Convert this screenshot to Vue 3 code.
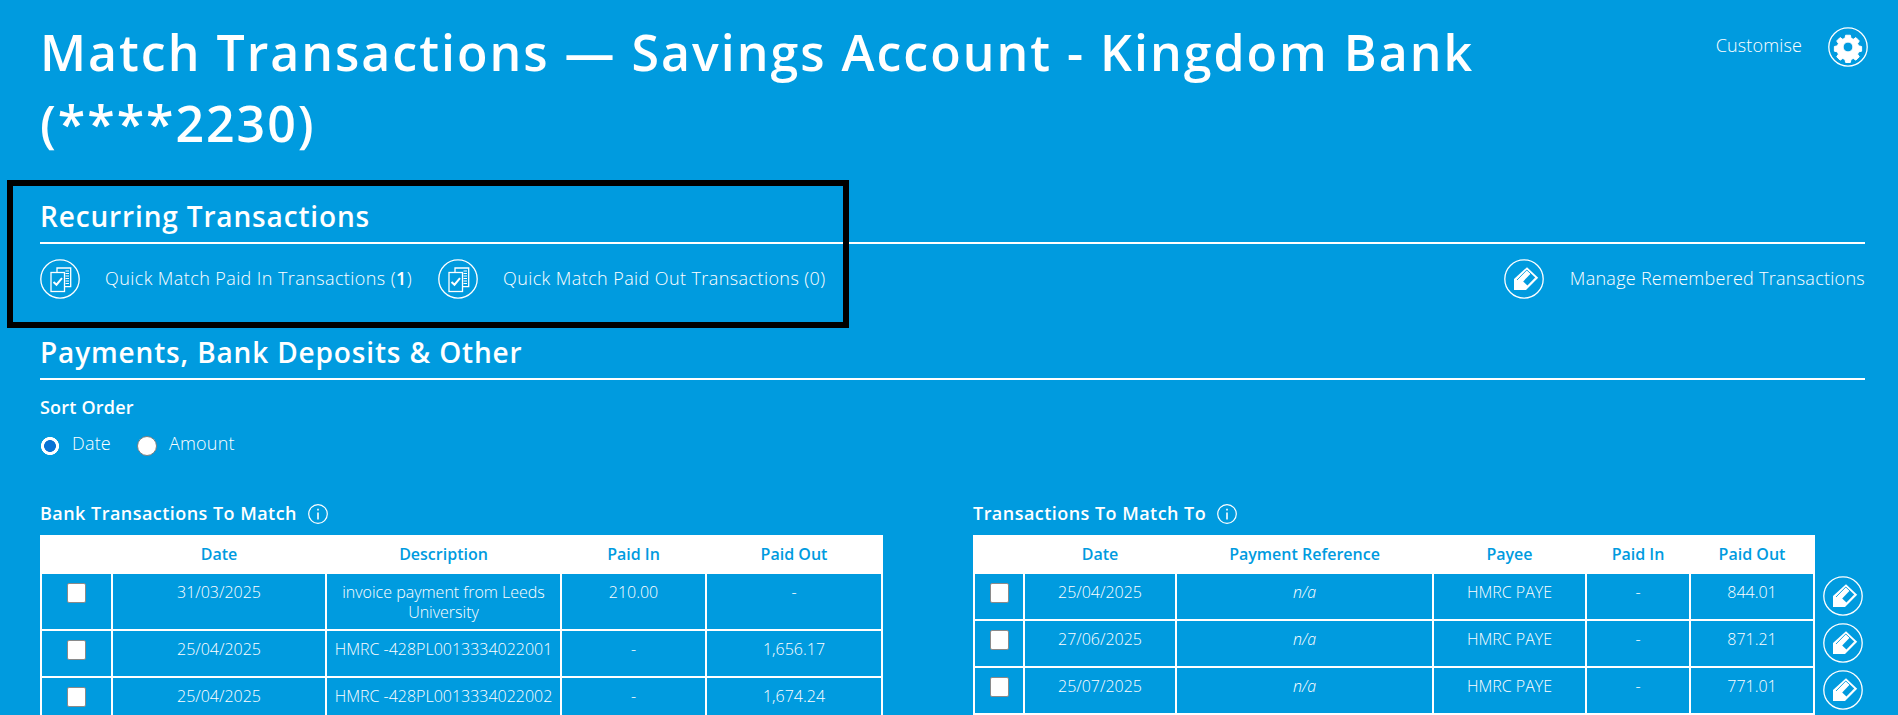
<script setup>
const bankRows = [
  { date: '31/03/2025', desc: 'invoice payment from Leeds University', paidIn: '210.00', paidOut: '-' },
  { date: '25/04/2025', desc: 'HMRC -428PL0013334022001', paidIn: '-', paidOut: '1,656.17' },
  { date: '25/04/2025', desc: 'HMRC -428PL0013334022002', paidIn: '-', paidOut: '1,674.24' }
]
const matchRows = [
  { date: '25/04/2025', paidOut: '844.01' },
  { date: '27/06/2025', paidOut: '871.21' },
  { date: '25/07/2025', paidOut: '771.01' }
]
</script>

<template>
  <div class="page">
    <header class="top">
      <h1>Match Transactions — Savings Account - Kingdom Bank (****2230)</h1>
      <div class="customise">
        <span class="label">Customise</span>
        <span class="round">
          <svg viewBox="0 0 40 40" width="40" height="40">
            <circle cx="20" cy="20" r="19.2" fill="none" stroke="#fff" stroke-width="1.3" />
            <path fill="#fff" stroke="#fff" stroke-width="1" stroke-linejoin="round" fill-rule="evenodd" d="M17.6 8h4.8l.7 3.1 2.3 1 2.7-1.7 3.4 3.4-1.7 2.7 1 2.3 3.1.7v4.8l-3.1.7-1 2.3 1.7 2.7-3.4 3.4-2.7-1.7-2.3 1-.7 3.1h-4.8l-.7-3.1-2.3-1-2.7 1.7-3.4-3.4 1.7-2.7-1-2.3-3.1-.7v-4.8l3.1-.7 1-2.3-1.7-2.7 3.4-3.4 2.7 1.7 2.3-1zM20 15a5 5 0 1 0 0 10 5 5 0 0 0 0-10z" transform="translate(20 20) scale(.98) translate(-20 -20)" />
          </svg>
        </span>
      </div>
    </header>

    <div class="boxed">
      <h2>Recurring Transactions</h2>
    </div>
    <div class="actions">
      <div class="action first">
        <svg class="ico" viewBox="0 0 40 40" width="40" height="40">
          <circle cx="20" cy="20" r="19.2" fill="none" stroke="#fff" stroke-width="1.3" />
          <path fill="none" stroke="#fff" stroke-width="1.3" d="M17 13V9h13.7v18.7H25" />
          <rect x="11" y="13.5" width="13.5" height="19" fill="none" stroke="#fff" stroke-width="1.3" />
          <path fill="none" stroke="#fff" stroke-width="1" d="M25.5 12h3.5M25.5 14.5h3.5M25.5 17h3.5M25.5 19.5h3.5M25.5 22h3.5M25.5 24.5h3.5" />
          <path fill="none" stroke="#fff" stroke-width="2" d="M13.5 23l3 2.7 5.5-6.5" />
        </svg>
        <span class="label">Quick Match Paid In Transactions (<b>1</b>)</span>
      </div>
      <div class="action second">
        <svg class="ico" viewBox="0 0 40 40" width="40" height="40">
          <circle cx="20" cy="20" r="19.2" fill="none" stroke="#fff" stroke-width="1.3" />
          <path fill="none" stroke="#fff" stroke-width="1.3" d="M17 13V9h13.7v18.7H25" />
          <rect x="11" y="13.5" width="13.5" height="19" fill="none" stroke="#fff" stroke-width="1.3" />
          <path fill="none" stroke="#fff" stroke-width="1" d="M25.5 12h3.5M25.5 14.5h3.5M25.5 17h3.5M25.5 19.5h3.5M25.5 22h3.5M25.5 24.5h3.5" />
          <path fill="none" stroke="#fff" stroke-width="2" d="M13.5 23l3 2.7 5.5-6.5" />
        </svg>
        <span class="label">Quick Match Paid Out Transactions (0)</span>
      </div>
      <div class="action manage">
        <svg class="ico" viewBox="0 0 40 40" width="40" height="40">
          <circle cx="20" cy="20" r="19.2" fill="none" stroke="#fff" stroke-width="1.3" />
          <path fill="#fff" d="M23 8.2L34.2 18.8 22 31H10V20z" />
          <path fill="#009bdf" d="M19.2 22.4l7.4-7.6 4.4 4-7.6 7.8z" />
          <path fill="none" stroke="#009bdf" stroke-width=".9" d="M13 21l9.8-10 8.4 7.9" />
        </svg>
        <span class="label">Manage Remembered Transactions</span>
      </div>
    </div>

    <h2 class="payments">Payments, Bank Deposits &amp; Other</h2>

    <div class="sort">
      <div class="sort-title">Sort Order</div>
      <div class="radios">
        <label><input type="radio" name="sort" checked /> <span>Date</span></label>
        <label><input type="radio" name="sort" /> <span>Amount</span></label>
      </div>
    </div>

    <div class="panels">
      <section class="panel left">
        <h3>Bank Transactions To Match
          <svg viewBox="0 0 20 20" width="20" height="20"><circle cx="10" cy="10" r="9.3" fill="none" stroke="#fff" stroke-width="1.2" /><path fill="#fff" d="M9.2 8.5h1.6v7H9.2zM9.2 4.8h1.6v1.8H9.2z" /></svg>
        </h3>
        <table class="bank">
          <colgroup><col class="b1" /><col class="b2" /><col class="b3" /><col class="b4" /><col class="b5" /></colgroup>
          <thead><tr><th></th><th>Date</th><th>Description</th><th>Paid In</th><th>Paid Out</th></tr></thead>
          <tbody>
            <tr v-for="(r, i) in bankRows" :key="i">
              <td><input type="checkbox" /></td>
              <td>{{ r.date }}</td>
              <td>{{ r.desc }}</td>
              <td>{{ r.paidIn }}</td>
              <td>{{ r.paidOut }}</td>
            </tr>
          </tbody>
        </table>
      </section>

      <section class="panel right">
        <h3>Transactions To Match To
          <svg viewBox="0 0 20 20" width="20" height="20"><circle cx="10" cy="10" r="9.3" fill="none" stroke="#fff" stroke-width="1.2" /><path fill="#fff" d="M9.2 8.5h1.6v7H9.2zM9.2 4.8h1.6v1.8H9.2z" /></svg>
        </h3>
        <div class="match-wrap">
          <table class="match">
            <colgroup><col class="m1" /><col class="m2" /><col class="m3" /><col class="m4" /><col class="m5" /><col class="m6" /></colgroup>
            <thead><tr><th></th><th>Date</th><th>Payment Reference</th><th>Payee</th><th>Paid In</th><th>Paid Out</th></tr></thead>
            <tbody>
              <tr v-for="(r, i) in matchRows" :key="i">
                <td><input type="checkbox" /></td>
                <td>{{ r.date }}</td>
                <td><em>n/a</em></td>
                <td>HMRC PAYE</td>
                <td>-</td>
                <td>{{ r.paidOut }}</td>
              </tr>
            </tbody>
          </table>
          <div class="edits">
            <svg v-for="(r, i) in matchRows" :key="i" viewBox="0 0 40 40" width="40" height="40">
              <circle cx="20" cy="20" r="19.2" fill="none" stroke="#fff" stroke-width="1.3" />
              <path fill="#fff" d="M23 8.2L34.2 18.8 22 31H10V20z" />
              <path fill="#009bdf" d="M19.2 22.4l7.4-7.6 4.4 4-7.6 7.8z" />
              <path fill="none" stroke="#009bdf" stroke-width=".9" d="M13 21l9.8-10 8.4 7.9" />
            </svg>
          </div>
        </div>
      </section>
    </div>
  </div>
</template>

<style>
html, body { margin: 0; height: 715px; overflow: hidden; background: #009bdf; }
</style>

<style scoped>
.page {
  position: relative;
  box-sizing: border-box;
  height: 715px;
  overflow: hidden;
  padding: 17px 33px 0 40px;
  background: #009bdf;
  color: #fff;
  font-family: "Open Sans", sans-serif;
  font-size: 18px;
  font-weight: 300;
}
.top { display: flex; justify-content: space-between; align-items: flex-start; height: 163px; }
h1 {
  margin: 0;
  width: 1500px;
  font-size: 50px;
  line-height: 71px;
  font-weight: 600;
  letter-spacing: 2px;
}
.customise { display: flex; align-items: center; gap: 26px; margin: 10px -3px 0 0; letter-spacing: .14px; }
.customise .label { margin-bottom: 4px; }
.round { display: flex; }
.boxed { position: relative; }
.boxed::after {
  content: "";
  position: absolute;
  left: -33px;
  top: 0;
  width: 830px;
  height: 136px;
  border: 6px solid #000;
}
h2 {
  margin: 0;
  padding: 0;
  box-sizing: border-box;
  border-bottom: 2px solid #fff;
  font-size: 28px;
  line-height: 36px;
  font-weight: 600;
  letter-spacing: .85px;
}
.boxed h2 { height: 64px; padding-top: 18px; }
.actions { display: flex; align-items: center; padding-top: 15px; height: 40px; }
.action { display: flex; align-items: center; gap: 25px; white-space: nowrap; letter-spacing: .41px; }
.action .label { margin-bottom: 3px; }
.action b { font-weight: 600; }
.action.second { margin-left: 26px; }
.action.manage { margin-left: auto; letter-spacing: .27px; gap: 26px; }
.payments { height: 81px; padding-top: 35px; }
.sort-title { font-weight: 600; margin-top: 16px; line-height: 22px; letter-spacing: .2px; }
.radios { display: flex; gap: 26px; margin-top: 14px; line-height: 22px; letter-spacing: .2px; }
.radios label { display: flex; align-items: flex-start; gap: 12px; }
input[type="radio"] {
  appearance: none;
  margin: 4px 0 0 0;
  width: 20px;
  height: 20px;
  box-sizing: border-box;
  border-radius: 50%;
  background: #fff;
  border: 1.5px solid #7f7f7f;
}
input[type="radio"]:checked {
  border: none;
  background: radial-gradient(circle, #0a72d4 0 5.6px, #fff 6.2px 8.7px, transparent 9.3px);
}
.panels { display: flex; gap: 90px; margin-top: 48px; }
.panel.left { width: 843px; }
.panel.right { width: 892px; }
h3 {
  margin: 0 0 11px;
  display: flex;
  align-items: flex-start;
  gap: 11px;
  height: 20px;
  font-size: 18px;
  font-weight: 600;
  line-height: 18px;
  letter-spacing: .46px;
  white-space: nowrap;
}
table {
  table-layout: fixed;
  border-collapse: separate;
  border-spacing: 2px;
  background: #fff;
  font-size: 16px;
  text-align: center;
  letter-spacing: 0;
}
.bank { width: 843px; }
.match { width: 842px; flex: none; }
th { height: 35px; padding: 0 0 2px; box-sizing: border-box; background: #fff; color: #009bdf; font-weight: 600; font-size: 16px; }
td { height: 45px; padding: 8px 4px 0; box-sizing: border-box; vertical-align: top; line-height: 20px; background: #009bdf; }
.bank tbody tr:first-child td { height: 55px; }
em { font-style: italic; }
.b1 { width: 69px; } .b2 { width: 212px; } .b3 { width: 233px; } .b4 { width: 143px; } .b5 { width: 174px; }
.m1 { width: 48px; } .m2 { width: 150px; } .m3 { width: 255px; } .m4 { width: 151px; } .m5 { width: 102px; } .m6 { width: 122px; }
input[type="checkbox"] {
  appearance: none;
  display: block;
  margin: 1px auto 0;
  width: 19px;
  height: 20px;
  box-sizing: border-box;
  border: 1.5px solid #8a8a8a;
  border-radius: 2px;
  background: #fff;
}
.match-wrap { display: flex; align-items: flex-start; gap: 8px; }
.edits { display: flex; flex-direction: column; gap: 7px; padding-top: 41px; }
.edits svg { display: block; }
</style>
